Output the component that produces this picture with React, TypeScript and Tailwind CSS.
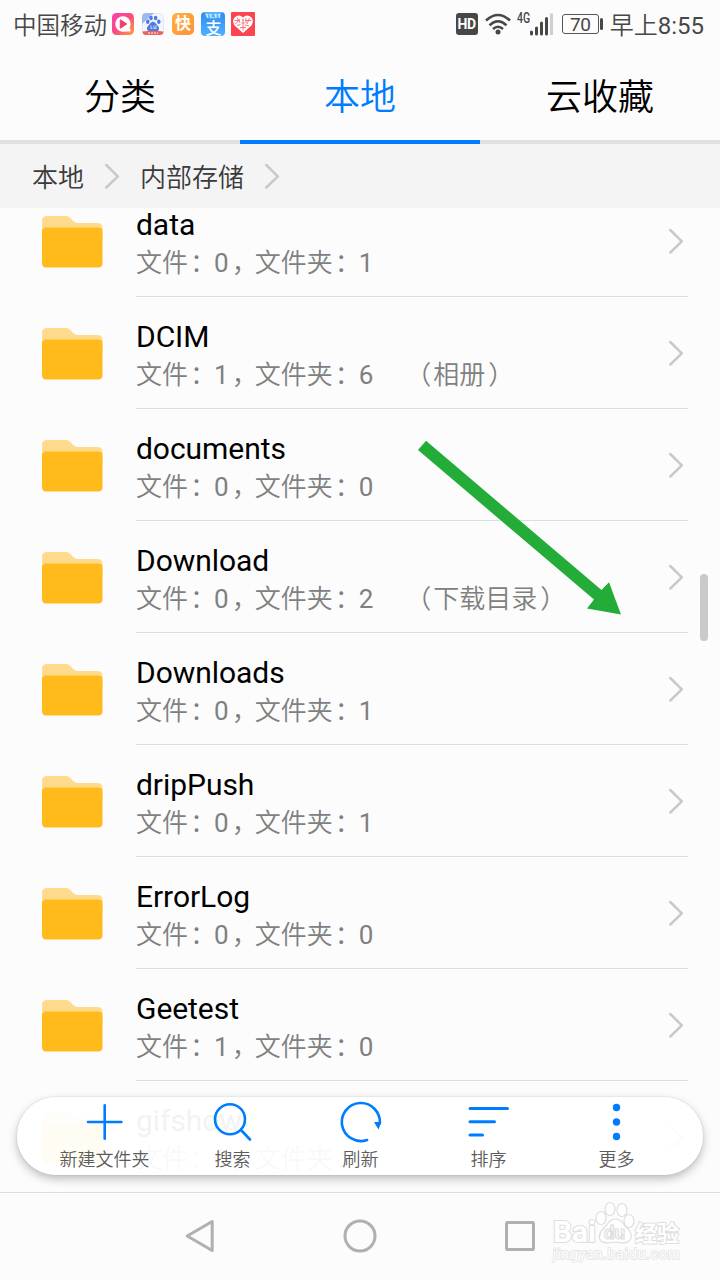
import React from "react"

type Folder = {
  name: string
  files: number
  folders: number
  note?: string
}

const folders: Folder[] = [
  { name: "data", files: 0, folders: 1 },
  { name: "DCIM", files: 1, folders: 6, note: "相册" },
  { name: "documents", files: 0, folders: 0 },
  { name: "Download", files: 0, folders: 2, note: "下载目录" },
  { name: "Downloads", files: 0, folders: 1 },
  { name: "dripPush", files: 0, folders: 1 },
  { name: "ErrorLog", files: 0, folders: 0 },
  { name: "Geetest", files: 1, folders: 0 },
  { name: "gifshow", files: 0, folders: 1 },
]

const tabs = ["分类", "本地", "云收藏"]

function Chevron() {
  return (
    <svg width="16" height="26" viewBox="0 0 16 26" fill="none" stroke="#c9c9c9" strokeWidth="2.5" strokeLinecap="round" strokeLinejoin="round">
      <path d="M2.300 2 L13.800 13.300 L2.300 24.500" />
    </svg>
  )
}

function FolderIcon() {
  return (
    <svg width="61" height="52" viewBox="0 0 61 52">
      <path d="M0 5 Q0 0 5 0 H24 Q26.500 0 28.500 2 L31 5 Q33 7 36 7 H55 Q60.500 7 60.500 12 V24 H0 Z" fill="#ffd98c" />
      <path d="M0 16 Q0 11.500 4.500 11.500 H56 Q60.500 11.500 60.500 16 V47 Q60.500 51.500 56 51.500 H4.500 Q0 51.500 0 47 Z" fill="#ffbb1c" />
    </svg>
  )
}

function AppBadges() {
  return (
    <div className="flex items-center">
      <svg width="22" height="22" viewBox="0 0 22 22">
        <defs>
          <linearGradient id="video" x1="0" y1="0" x2="1" y2="1">
            <stop offset="0" stopColor="#fb3fb4" />
            <stop offset="0.5" stopColor="#fb4a80" />
            <stop offset="1" stopColor="#ffa33c" />
          </linearGradient>
        </defs>
        <rect width="22" height="22" rx="4.500" fill="url(#video)" />
        <circle cx="11" cy="11" r="7.700" fill="#fff" />
        <path d="M13 15 L18.500 15.500 V18.500 H12 Z" fill="#fff" />
        <path d="M8.300 6.800 L14.800 11 L8.300 15.200 Z" fill="#f73a6c" stroke="#f73a6c" strokeLinejoin="round" />
      </svg>
      <svg width="22" height="22" viewBox="0 0 22 22" className="ml-2">
        <rect x="0.500" y="0.500" width="21" height="21" rx="4" fill="#f3f6fc" stroke="#e3e8f0" />
        <path d="M0 4 Q0 0 4 0 H12 L0 11 Z" fill="#9db9ef" />
        <g fill="#4d7be2">
          <ellipse cx="5.800" cy="8.800" rx="1.800" ry="2.300" />
          <ellipse cx="9" cy="5" rx="1.800" ry="2.300" />
          <ellipse cx="13.600" cy="5" rx="1.800" ry="2.300" />
          <ellipse cx="16.800" cy="8.800" rx="1.800" ry="2.300" />
          <path d="M11 8.500 Q13 8.500 15 12 Q18.500 15 16 18 H6 Q3.500 15 7 12 Q9 8.500 11 8.500 Z" />
        </g>
        <path d="M9 12.500 V15.500 H10.500 M12 12.500 V15.500 H14 V12.500" stroke="#cfdcf8" fill="none" />
        <path d="M0.500 18.500 Q11 17 21.500 18.500 Q21.500 22 18 22 H4 Q0.500 22 0.500 18.500 Z" fill="#e8655f" />
        <path d="M6 20 H16" stroke="#f8c8c5" strokeWidth="1.500" strokeDasharray="2 1" />
      </svg>
      <div className="ml-2 flex h-[22px] w-[22px] items-center justify-center rounded-[5px] bg-linear-to-br from-[#ffb13d] to-[#ff8f3d] text-[16px] leading-none font-bold text-white">
        快
      </div>
      <svg width="24" height="24" viewBox="0 0 24 24" className="ml-[7px]">
        <defs>
          <linearGradient id="pay" x1="0" y1="0" x2="0" y2="1">
            <stop offset="0" stopColor="#2f8cf0" />
            <stop offset="1" stopColor="#4fb0ff" />
          </linearGradient>
        </defs>
        <rect width="24" height="24" rx="4" fill="url(#pay)" />
        <path d="M3 0 H21 L19 5 Q12 9 5 5 Z" fill="#5cb6ff" />
        <text x="12" y="6" fontSize="6" fontWeight="700" textAnchor="middle" fill="#fff">11.11</text>
        <text x="12.500" y="21.500" fontSize="16" fontWeight="500" textAnchor="middle" fill="#fff">支</text>
      </svg>
      <svg width="24" height="24" viewBox="0 0 24 24" className="ml-[6px]">
        <rect width="24" height="24" rx="1" fill="#fb4450" />
        <path d="M12 21 L3.500 13.500 Q0.800 9 3.500 5.500 Q8 1.500 12 5.500 Q16 1.500 20.500 5.500 Q23.200 9 20.500 13.500 Z" fill="#fff" />
        <path d="M3.500 8.500 H9 M6 5.500 L9 11 M9 6.500 L4.500 12 M15 6 V11 M14 8.500 H20.500 M18.500 6 L16 12 M11 8 H13 M10.500 11 H13.500 M6 13.500 L9.500 12.500 M14 13 L18 14 M9 15.500 H15 M12 7 V18.500" stroke="#fb6670" strokeWidth="0.9" />
      </svg>
    </div>
  )
}

function StatusBar() {
  return (
    <div className="flex h-[50px] items-center justify-between pt-px pr-4 pl-[13px] text-[#474747]">
      <div className="flex items-center gap-[5px]">
        <span className="pt-[3px] text-[23.500px] leading-none font-[350]">中国移动</span>
        <div className="-mt-[3px]">
          <AppBadges />
        </div>
      </div>
      <div className="-mt-[3px] flex items-center">
        <div className="flex h-[22px] w-[22px] items-center justify-center rounded-[3px] bg-[#474747] text-[14px] leading-none font-bold tracking-tight text-white">
          HD
        </div>
        <svg width="26" height="22" viewBox="0 0 26 22" fill="none" stroke="#474747" strokeWidth="2.500" className="ml-[7px]">
          <path d="M1 7.500 Q13 -3.500 25 7.500" />
          <path d="M4.500 12.300 Q13 4.300 21.500 12.300" />
          <path d="M8 16 Q13 11.500 18 16" />
          <circle cx="13" cy="19" r="2.500" fill="#474747" stroke="none" />
        </svg>
        <div className="ml-[6px] flex">
          <span className="h-6 w-[13px] origin-left scale-x-75 text-[14px] leading-[12px] font-medium">4G</span>
          <svg width="24" height="24" viewBox="0 0 24 24" className="-ml-px">
            <path d="M2.500 20 V22 M7.500 16 V22 M12.500 11 V22 M17.500 6.500 V22" stroke="#474747" strokeWidth="3" strokeLinecap="round" />
            <path d="M22.500 1.500 V23" stroke="#cfcfcf" strokeWidth="3" />
          </svg>
        </div>
        <div className="ml-[9px] flex h-5 w-[37px] items-center justify-center rounded-[3px] border border-[#555] text-[19px] leading-none tracking-tight">
          70
        </div>
        <div className="ml-px h-3 w-[3px] rounded-sm bg-[#474747]" />
        <span className="ml-[7px] pt-[4px] text-[24px] leading-none font-[350]">
          早上<span className="font-normal">8:55</span>
        </span>
      </div>
    </div>
  )
}

function Colon() {
  return <span className="w-[26px] pl-[2px]">：</span>
}

function FolderRow({ folder }: { folder: Folder }) {
  return (
    <div className="flex h-28 shrink-0 pr-8 pl-[42px]">
      <div className="mt-[31px] w-[94px]">
        <FolderIcon />
      </div>
      <div className="flex flex-1 justify-between border-b border-[#dedede]">
        <div className="pt-[22px]">
          <div className="text-[30px] leading-9 tracking-[-0.05px] text-black">{folder.name}</div>
          <div className="flex text-[26px] leading-10 font-[350] whitespace-nowrap text-[#808080]">
            <span>文件</span>
            <Colon />
            <span className="font-normal">{folder.files}</span>
            <span className="w-[26px] pl-[3px]">，</span>
            <span>文件夹</span>
            <Colon />
            <span className="font-normal">{folder.folders}</span>
            {folder.note && (
              <div className="ml-8 flex">
                <span className="w-[28px]">（</span>
                <span>{folder.note}</span>
                <span className="ml-[3px]">）</span>
              </div>
            )}
          </div>
        </div>
        <div className="mt-[43px] mr-1">
          <Chevron />
        </div>
      </div>
    </div>
  )
}

function ToolItem({ label, children }: { label: string; children: React.ReactNode }) {
  return (
    <div className="flex w-32 flex-col items-center">
      <svg width="44" height="44" viewBox="0 0 44 44" fill="none" stroke="#007dff" strokeWidth="2.600" strokeLinecap="round">
        {children}
      </svg>
      <span className="mt-1 ml-px text-[18px] leading-6 font-[350] text-[#5c5c5c]">{label}</span>
    </div>
  )
}

function Toolbar() {
  return (
    <div className="absolute top-[889px] left-[17px] flex h-[78px] w-[686px] justify-center rounded-full bg-white/95 pt-[3px] shadow-[0_4px_10px_rgba(0,0,0,0.25),0_0_2px_rgba(0,0,0,0.15)]">
      <ToolItem label="新建文件夹">
        <path d="M22.700 5.300 V38.700 M6 22 H39.400" />
      </ToolItem>
      <ToolItem label="搜索">
        <circle cx="20" cy="19.300" r="15" />
        <path d="M31 30 L40 39.500" />
      </ToolItem>
      <ToolItem label="刷新">
        <path d="M29 40 A19 19 0 1 1 41.800 23.500" />
        <path d="M36 22 H43.300 L40.500 29.500 Z" fill="#007dff" stroke="none" />
      </ToolItem>
      <ToolItem label="排序">
        <path d="M4 8.500 H41.500 M4 21.700 H28.500 M4 35 H16.500" strokeWidth="3" />
      </ToolItem>
      <ToolItem label="更多">
        <g fill="#007dff" stroke="none">
          <circle cx="22.500" cy="7.500" r="3.700" />
          <circle cx="22.500" cy="22" r="3.700" />
          <circle cx="22.500" cy="36.500" r="3.700" />
        </g>
      </ToolItem>
    </div>
  )
}

function Watermark() {
  return (
    <svg width="136" height="66" viewBox="0 0 136 66" className="absolute top-[7px] right-[34px]" fill="#fff" stroke="#dedede" strokeWidth="1.200">
      <g fontFamily="Roboto, 'Noto Sans CJK SC', sans-serif" paintOrder="stroke" strokeWidth="2">
        <text x="3" y="42" fontSize="29" fontWeight="700" textLength="43" lengthAdjust="spacingAndGlyphs">Bai</text>
        <text x="85" y="41" fontSize="22" fontWeight="700">经验</text>
        <text x="3" y="59" fontSize="14" textLength="127" strokeWidth="1.600" stroke="#e2e2e2">jingyan.baidu.com</text>
      </g>
      <ellipse cx="51" cy="18" rx="5" ry="6.500" />
      <ellipse cx="60" cy="9" rx="5" ry="6.500" />
      <ellipse cx="72" cy="10" rx="5" ry="6.500" />
      <ellipse cx="79" cy="21" rx="5" ry="6.500" />
      <path d="M65 19 Q71 19 75 26 Q85 35 79 41 Q76 44 65 42 Q54 44 51 41 Q46 35 56 26 Q60 19 65 19 Z" />
      <text x="54" y="39" fontSize="18" fontFamily="Roboto, sans-serif" fontWeight="700" textLength="21" lengthAdjust="spacingAndGlyphs">du</text>
    </svg>
  )
}

function App() {
  return (
    <div className="flex h-[1280px] w-[720px] flex-col overflow-hidden bg-[#fcfcfc] font-[Roboto,'Noto_Sans_CJK_SC',sans-serif]">
      <StatusBar />
      <div className="flex h-[94px]">
        {tabs.map((tab) => (
          <div
            key={tab}
            className={
              tab === "本地"
                ? "flex flex-1 justify-center border-b-4 border-[#007dff] pt-[21px] text-[36px] leading-[54px] font-[350] text-[#007dff]"
                : "flex flex-1 justify-center border-b-4 border-[#e1e1e1] pt-[21px] text-[36px] leading-[54px] font-[350] text-black"
            }
          >
            {tab}
          </div>
        ))}
      </div>
      <div className="flex h-16 items-center bg-[#f4f4f4] pl-8 text-[26px] leading-none font-[350] text-[#3a3a3a]">
        <span className="pt-[3px]">本地</span>
        <div className="ml-5">
          <Chevron />
        </div>
        <span className="ml-5 pt-[3px]">内部存储</span>
        <div className="ml-5">
          <Chevron />
        </div>
      </div>

      <div className="relative h-[984px] overflow-hidden">
        <div className="-mt-[23px] flex flex-col">
          {folders.map((folder) => (
            <FolderRow key={folder.name} folder={folder} />
          ))}
        </div>
        <div className="absolute top-[366px] right-3 h-[67px] w-2 rounded-full bg-[#c9c9c9]" />
        {/* pointer towards the scroll handle */}
        <svg width="204" height="176" viewBox="0 0 204 176" className="absolute top-[232px] left-[417px]">
          <path d="M9 0.800 L184.500 150 L192 142.300 L204 174.500 L170 168.500 L177 159.500 L1 10 Z" fill="#23ac38" />
        </svg>
        <Toolbar />
      </div>

      <div className="relative flex h-22 justify-center gap-[126px] border-t border-[#dedede] pt-[26px]">
        <svg width="34" height="34" viewBox="0 0 34 34" fill="none" stroke="#b0b0b0" strokeWidth="3" strokeLinejoin="round">
          <path d="M4.200 17 L29.200 2.500 V31.500 Z" />
        </svg>
        <svg width="34" height="34" viewBox="0 0 34 34" fill="none" stroke="#b0b0b0" strokeWidth="3">
          <circle cx="17" cy="17" r="15" />
        </svg>
        <svg width="34" height="34" viewBox="0 0 34 34" fill="none" stroke="#b0b0b0" strokeWidth="3">
          <rect x="3.500" y="3.500" width="27" height="27" rx="1" />
        </svg>
        <Watermark />
      </div>
    </div>
  )
}

export default App
